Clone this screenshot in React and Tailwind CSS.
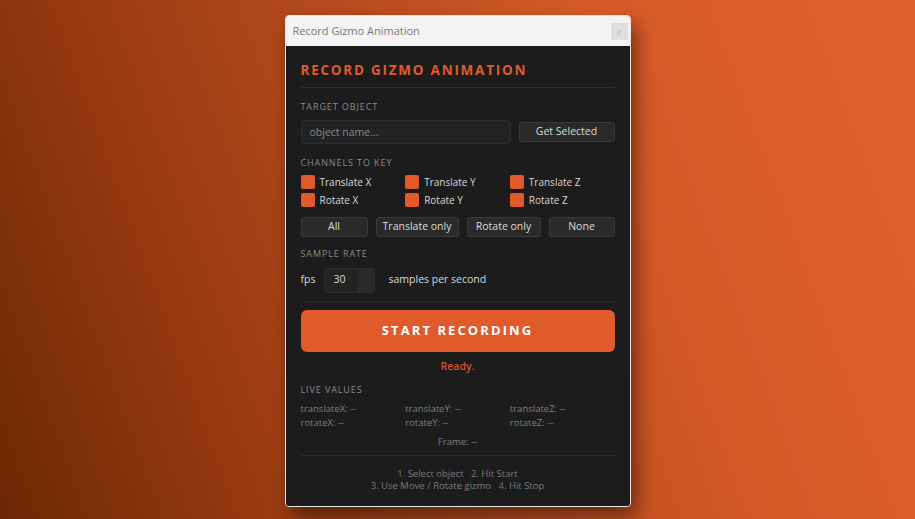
import React from "react";

const channels = [
  "Translate X",
  "Translate Y",
  "Translate Z",
  "Rotate X",
  "Rotate Y",
  "Rotate Z",
];

const live = [
  "translateX: --",
  "translateY: --",
  "translateZ: --",
  "rotateX: --",
  "rotateY: --",
  "rotateZ: --",
];

const SectionLabel = ({ children }) => (
  <p className="text-[9px] tracking-[0.1em] text-[#8a8a8a] leading-none">{children}</p>
);

const SmallButton = ({ children, className = "" }) => (
  <button
    className={
      "h-[20px] rounded-[3px] border border-[#3a3a3a] bg-[#2a2a2a] text-[10.5px] font-medium text-[#dcdcdc] leading-none " +
      className
    }
  >
    {children}
  </button>
);

const App = () => {
  return (
    <div
      className="w-[915px] h-[519px] flex justify-center pt-[15px] bg-[linear-gradient(70deg,#6c2703_0%,#9a3b12_25%,#d55a28_70%,#e2602f_100%)]"
      style={{ fontFamily: '"Open Sans", "Noto Sans", sans-serif' }}
    >
      <div className="w-[346px] h-[492px] flex flex-col rounded-[4px] border border-[#e6e6e6] overflow-hidden shadow-[6px_10px_18px_rgba(0,0,0,0.45)]">
        <div className="h-[30px] flex items-center justify-between bg-[#f3f3f3] pl-[7px] pr-[2px]">
          <span className="text-[11px] text-[#7a7a7a]">Record Gizmo Animation</span>
          <span className="w-[17px] h-[17px] bg-[#dedede] text-[#bdbdbd] text-[9px] flex items-center justify-center leading-none">
            x
          </span>
        </div>

        <div className="flex-1 bg-[#1c1c1c] px-[15px] flex flex-col">
          <h1 className="mt-[18px] text-[13.5px] font-bold tracking-[0.13em] text-[#e05a2b] leading-none">
            RECORD GIZMO ANIMATION
          </h1>
          <div className="mt-[9px] h-px bg-[#303030]" />

          <div className="mt-[14px]">
            <SectionLabel>TARGET OBJECT</SectionLabel>
          </div>
          <div className="mt-[9px] flex items-center gap-[8px]">
            <input
              placeholder="object name..."
              className="w-[210px] h-[24px] rounded-[3px] border border-[#2e2e2e] bg-[#232323] px-[8px] text-[10.5px] text-[#ddd] placeholder:text-[#8a8a8a] outline-none"
            />
            <SmallButton className="flex-1">Get Selected</SmallButton>
          </div>

          <div className="mt-[14px]">
            <SectionLabel>CHANNELS TO KEY</SectionLabel>
          </div>
          <div className="mt-[8px] grid grid-cols-3 gap-y-[4px]">
            {channels.map((c) => (
              <label key={c} className="flex items-center gap-[5px] h-[14px]">
                <span className="w-[14px] h-[14px] rounded-[2px] bg-[#e05a2b]" />
                <span className="text-[10px] font-medium text-[#d8d8d8] leading-none">{c}</span>
              </label>
            ))}
          </div>

          <div className="mt-[10px] flex gap-[8px]">
            <SmallButton className="w-[67px]">All</SmallButton>
            <SmallButton className="w-[83px]">Translate only</SmallButton>
            <SmallButton className="w-[74px]">Rotate only</SmallButton>
            <SmallButton className="flex-1">None</SmallButton>
          </div>

          <div className="mt-[12px]">
            <SectionLabel>SAMPLE RATE</SectionLabel>
          </div>
          <div className="mt-[10px] flex items-center">
            <span className="text-[10.5px] text-[#d8d8d8] w-[23px]">fps</span>
            <div className="w-[51px] h-[25px] flex rounded-[3px] border border-[#2e2e2e] bg-[#232323] overflow-hidden">
              <span className="flex-1 flex items-center pl-[9px] text-[10.5px] text-[#d8d8d8]">30</span>
              <span className="w-[16px] bg-[#2a2a2a]" />
            </div>
            <span className="ml-[14px] text-[10.5px] font-medium text-[#d8d8d8]">samples per second</span>
          </div>

          <div className="mt-[8px] h-px bg-[#2c2c2c]" />

          <button className="mt-[8px] h-[42px] rounded-[6px] bg-[#e05a2b] text-white text-[13px] font-bold tracking-[0.16em]">
            START RECORDING
          </button>

          <p className="mt-[7px] text-center text-[10.5px] font-semibold text-[#d2562a]">Ready.</p>

          <div className="mt-[11px]">
            <SectionLabel>LIVE VALUES</SectionLabel>
          </div>
          <div className="mt-[9px] grid grid-cols-3 gap-y-[2px]">
            {live.map((v) => (
              <span key={v} className="text-[9.5px] text-[#7e7e7e] leading-[12px]">
                {v}
              </span>
            ))}
          </div>
          <p className="mt-[7px] text-center text-[9.5px] text-[#7e7e7e] leading-[12px]">Frame: --</p>

          <div className="mt-[7px] h-px bg-[#2c2c2c]" />

          <div className="mt-[12px] text-center text-[9.5px] text-[#7a7a7a] leading-[12px]">
            <p>1. Select object &nbsp; 2. Hit Start</p>
            <p>3. Use Move / Rotate gizmo &nbsp; 4. Hit Stop</p>
          </div>
        </div>
      </div>
    </div>
  );
};

export default App;
